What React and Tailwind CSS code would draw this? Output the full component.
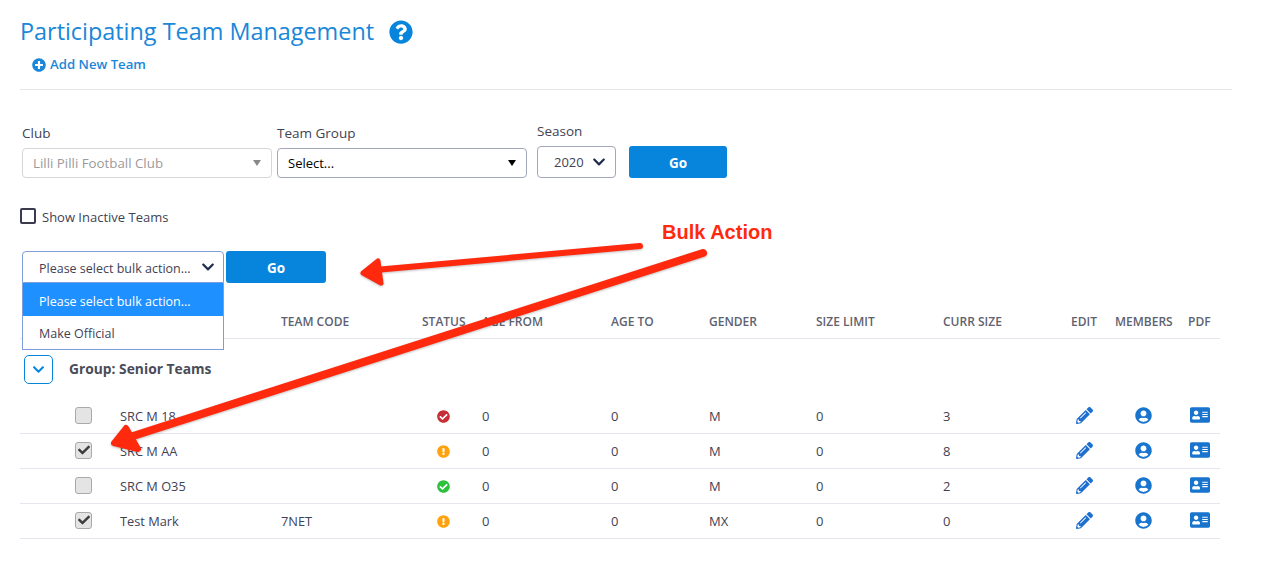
import React from "react";
import {
  FaQuestionCircle,
  FaPlusCircle,
  FaPencilAlt,
  FaUserCircle,
  FaAddressCard,
  FaCheckCircle,
  FaExclamationCircle,
  FaCheck,
  FaChevronDown,
} from "react-icons/fa";

const rowGrid =
  "grid grid-cols-[100px_161px_141px_60px_129px_98px_107px_127px_128px_44px_73px_32px] items-center";

const headers = [
  "",
  "",
  "TEAM CODE",
  "STATUS",
  "AGE FROM",
  "AGE TO",
  "GENDER",
  "SIZE LIMIT",
  "CURR SIZE",
  "EDIT",
  "MEMBERS",
  "PDF",
];

const teams = [
  { name: "SRC M 18", code: "", status: "official", checked: false, gender: "M", curr: 3 },
  { name: "SRC M AA", code: "", status: "warn", checked: true, gender: "M", curr: 8 },
  { name: "SRC M O35", code: "", status: "ok", checked: false, gender: "M", curr: 2 },
  { name: "Test Mark", code: "7NET", status: "warn", checked: true, gender: "MX", curr: 0 },
];

const StatusIcon = ({ status }) => {
  if (status === "official") return <FaCheckCircle className="text-[#c62f35] text-[13px]" />;
  if (status === "ok") return <FaCheckCircle className="text-[#2ec13c] text-[13px]" />;
  return <FaExclamationCircle className="text-[#ffa20d] text-[13px]" />;
};

const Arrows = () => (
  <svg
    className="absolute left-0 top-0 pointer-events-none drop-shadow-[0_1px_1px_rgba(0,0,0,0.25)]"
    width="1280"
    height="561"
  >
    <g fill="#ff2a0e" stroke="#ff2a0e" strokeLinecap="round" strokeLinejoin="round">
      <line x1="640" y1="246" x2="375" y2="270" strokeWidth="6" />
      <polygon points="363,273 378,261 381,283" strokeWidth="5" />
      <line x1="703" y1="253" x2="130" y2="437" strokeWidth="8" />
      <polygon points="114,443 126,428 138,449" strokeWidth="6" />
    </g>
  </svg>
);

export default function App() {
  return (
    <div
      className="relative w-[1280px] h-[561px] overflow-hidden bg-white text-[#3f4254] text-[13px]"
      style={{ fontFamily: '"Open Sans", sans-serif' }}
    >
      <div className="w-[1212px] ml-5">
        {/* Header */}
        <div className="flex items-center h-[55px] pt-[6px]">
          <h1 className="text-[23.4px] leading-8 font-medium text-[#1a87d9]">
            Participating Team Management
          </h1>
          <FaQuestionCircle className="ml-[15px] mt-[2px] text-[24px] text-[#0785dc]" />
        </div>
        <div className="flex items-center gap-[4px] pl-[12px] h-[20px] text-[#1a87d9] text-[13.2px] font-semibold">
          <FaPlusCircle className="text-[14px]" />
          <span>Add New Team</span>
        </div>
        <div className="mt-[14px] border-b border-[#e6e6e8]" />

        {/* Filters */}
        <div className="flex items-end mt-[31px] pl-[2px]">
          <div className="w-[255px]">
            <div className="text-[13.5px] leading-5 mb-[5px]">Club</div>
            <div className="flex items-center justify-between w-[250px] h-[30px] px-[10px] border border-[#d5d5da] rounded-[4px] text-[#9a9a9a] text-[13.3px]">
              <span className="pt-[2px]">Lilli Pilli Football Club</span>
              <span className="w-0 h-0 border-x-[4px] border-x-transparent border-t-[6px] border-t-[#888888]" />
            </div>
          </div>
          <div className="w-[260px]">
            <div className="text-[13.5px] leading-5 mb-[5px]">Team Group</div>
            <div className="flex items-center justify-between w-[250px] h-[30px] px-[10px] border border-[#a3a8b8] rounded-[4px] text-black">
              <span className="pt-[2px]">Select...</span>
              <span className="w-0 h-0 border-x-[4px] border-x-transparent border-t-[6px] border-t-black" />
            </div>
          </div>
          <div className="w-[92px]">
            <div className="text-[13.5px] leading-5 mb-[5px]">Season</div>
            <div className="flex items-center justify-between w-[79px] h-[32px] pl-[16px] pr-[9px] border border-[#a3a8b8] rounded-[4px]">
              <span className="pt-[2px]">2020</span>
              <FaChevronDown className="text-[14px] text-[#1d2b4f]" />
            </div>
          </div>
          <button className="w-[98px] h-[32px] pt-[2px] rounded-[3px] bg-[#0785dc] text-white text-[13.5px] font-bold">
            Go
          </button>
        </div>

        <label className="flex items-center mt-[31px] h-[18px]">
          <span className="w-4 h-4 -mt-[5px] border-2 border-[#3a3a4e] rounded-[2px]" />
          <span className="ml-[6px] text-[13px]">Show Inactive Teams</span>
        </label>

        {/* Bulk actions */}
        <div className="flex mt-[24px] pl-[2px]">
          <div className="relative">
            <div className="flex items-center justify-between w-[202px] h-[32px] pl-[16px] pr-[8px] border border-[#7f9ddb] rounded-t-[4px] bg-white">
              <span className="pt-[4px] text-[12.5px]">Please select bulk action...</span>
              <FaChevronDown className="text-[14px] text-[#1d2b4f]" />
            </div>
            <div className="absolute z-10 left-0 top-[32px] w-[202px] border border-t-0 border-[#7f9ddb] bg-white text-[12.5px]">
              <div className="h-[33px] pl-4 pt-[5px] flex items-center bg-[#1e90ff] text-white">
                Please select bulk action...
              </div>
              <div className="h-[33px] pl-4 pt-[3px] flex items-center">Make Official</div>
            </div>
          </div>
          <button className="ml-[2px] w-[100px] h-[32px] pt-[2px] rounded-[3px] bg-[#0785dc] text-white text-[13.5px] font-bold">
            Go
          </button>
        </div>

        {/* Team table */}
        <div className="w-[1200px] mt-[23px]">
          <div className={`${rowGrid} h-[33px] border-b border-[#e6e6ef] text-[12px] font-semibold text-[#5e6270]`}>
            {headers.map((h, i) => (
              <div key={i} className="whitespace-nowrap">{h}</div>
            ))}
          </div>
          <div className="flex items-center h-[60px] pl-[4px]">
            <span className="flex items-center justify-center w-[29px] h-[29px] border border-[#0785dc] rounded-[5px] text-[#0785dc]">
              <FaChevronDown className="text-[13px]" />
            </span>
            <span className="ml-4 text-[13.8px] font-bold text-[#4a4c58]">Group: Senior Teams</span>
          </div>
          {teams.map((t) => (
            <div key={t.name} className={`${rowGrid} h-[35px] border-b border-[#e6e6ef]`}>
              <div className="pl-[55px]">
                <span className="flex items-center justify-center w-[17px] h-[17px] -mt-[2px] border border-[#a9a9a9] rounded-[3px] bg-[#e4e4e4] text-[#3c3c3c]">
                  {t.checked && <FaCheck className="text-[12px]" />}
                </span>
              </div>
              <div className="pt-[1px] text-[12.8px]">{t.name}</div>
              <div className="pt-[1px] text-[12.8px]">{t.code}</div>
              <div className="pl-[15px]"><StatusIcon status={t.status} /></div>
              <div className="pt-[1px]">0</div>
              <div className="pt-[1px]">0</div>
              <div className="pt-[1px]">{t.gender}</div>
              <div className="pt-[1px]">0</div>
              <div className="pt-[1px]">{t.curr}</div>
              <div className="pl-[5px] -mt-[2px]"><FaPencilAlt className="text-[17px] text-[#1e6fd0]" /></div>
              <div className="pl-[20px] -mt-[2px]"><FaUserCircle className="text-[17px] text-[#1874cd]" /></div>
              <div className="pl-[2px] -mt-[2px]"><FaAddressCard className="text-[20px] text-[#1874cd]" /></div>
            </div>
          ))}
        </div>
      </div>

      <div className="absolute left-[662px] top-[220px] text-[20px] leading-6 font-bold text-[#ff2a0e] font-['Liberation_Sans',sans-serif]">
        Bulk Action
      </div>
      <Arrows />
    </div>
  );
}
